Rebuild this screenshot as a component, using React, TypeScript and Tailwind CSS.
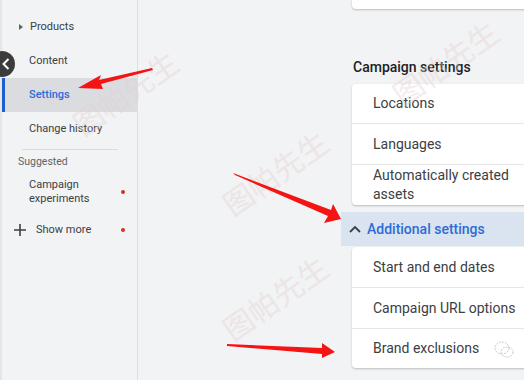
import React from "react";

const wm = "图帕先生";

function Watermark({ x, y }: { x: number; y: number }) {
  return (
    <div
      className="absolute pointer-events-none text-[30px] text-[#e7cfd0] opacity-40 whitespace-nowrap"
      style={{ left: x, top: y, transform: "rotate(-35deg)", fontFamily: '"Noto Sans CJK SC", sans-serif' }}
    >
      {wm}
    </div>
  );
}

export default function App() {
  const side = "font-['Roboto',sans-serif]";
  const card = "font-['Roboto',sans-serif]";
  return (
    <div className="relative w-[524px] h-[380px] overflow-hidden bg-[#f1f3f4] flex">
      {/* sidebar */}
      <div className={`w-[138px] shrink-0 h-full border-l-2 border-l-[#e4e6e8] border-r border-r-[#dcdee0] flex flex-col pt-[10px] text-[11px] text-[#3c4043] ${side}`}>
        <div className="h-[34px] flex items-center pl-[16px]">
          <svg width="6" height="8" viewBox="0 0 6 8" className="mr-[6px]"><path d="M1 1 L5 4 L1 7 Z" fill="#5f6368" /></svg>
          <span>Products</span>
        </div>
        <div className="h-[34px] flex items-center pl-[27px]">Content</div>
        <div className="h-[34px] flex items-center pl-[24px] bg-[#dadce0] border-l-[3px] border-[#1a5fd0] text-[#2f6bd6] font-medium">Settings</div>
        <div className="h-[34px] flex items-center pl-[27px]">Change history</div>
        <div className="mt-[3px] ml-[20px] w-[96px] h-px bg-[#dadce0]" />
        <div className="mt-[5px] pl-[16px] text-[10.5px] leading-[14px] text-[#5f6368]">Suggested</div>
        <div className="mt-[9px] pl-[27px] pr-[12px] flex items-center justify-between leading-[13.5px]">
          <span>Campaign<br />experiments</span>
          <span className="w-[4px] h-[4px] rounded-full bg-[#d93025]" />
        </div>
        <div className="mt-[13px] h-[24px] pl-[11px] pr-[12px] flex items-center">
          <svg width="14" height="14" viewBox="0 0 14 14" className="mr-[9px]"><path d="M7 1 V13 M1 7 H13" stroke="#3c4043" strokeWidth="1.6" /></svg>
          <span className="flex-1">Show more</span>
          <span className="w-[4px] h-[4px] rounded-full bg-[#d93025]" />
        </div>
      </div>

      {/* main */}
      <div className={`flex-1 h-full pl-[203px] ${card}`}>
        <div className="w-[200px] flex flex-col">
          <div className="ml-[11px] h-[9px] bg-white rounded-b-[4px] shadow-[0_1px_2px_rgba(60,64,67,0.3)]" />
          <div className="ml-[12px] mt-[50px] text-[14px] leading-[17px] text-[#202124] font-medium">Campaign settings</div>
          <div className="ml-[11px] mt-[8px] bg-white rounded-l-[4px] shadow-[0_1px_2px_rgba(60,64,67,0.3)] text-[14px] text-[#3c4043]">
            <div className="h-[39px] flex items-center pl-[21px]">Locations</div>
            <div className="h-[41px] flex items-center pl-[21px] border-t border-[#e6e6e6]">Languages</div>
            <div className="h-[41px] flex items-center pl-[21px] border-t border-[#e6e6e6] leading-[19px]">Automatically created<br />assets</div>
          </div>
          <div className="mt-[7px] h-[34px] bg-[#dae3f0] flex items-center pl-[7px] text-[14px] text-[#2f6bd6] font-medium">
            <svg width="14" height="10" viewBox="0 0 14 10" className="mr-[5px]"><path d="M2 8 L7 3 L12 8" stroke="#3c4043" strokeWidth="1.8" fill="none" /></svg>
            Additional settings
          </div>
          <div className="ml-[11px] mt-px bg-white rounded-l-[4px] shadow-[0_1px_2px_rgba(60,64,67,0.3)] text-[14px] text-[#3c4043]">
            <div className="h-[40px] flex items-center pl-[21px]">Start and end dates</div>
            <div className="h-[41px] flex items-center pl-[21px] border-t border-[#e6e6e6]">Campaign URL options</div>
            <div className="h-[40px] flex items-center pl-[21px] border-t border-[#e6e6e6]">Brand exclusions</div>
          </div>
        </div>
      </div>

      {/* collapse button */}
      <div className="absolute left-[-11px] top-[51px] w-[26px] h-[26px] rounded-full bg-[#3c3c3c] flex items-center justify-end pr-[5px]">
        <svg width="8" height="12" viewBox="0 0 8 12"><path d="M6.5 1 L1.5 6 L6.5 11" stroke="white" strokeWidth="2" fill="none" /></svg>
      </div>

      {/* watermarks */}
      <Watermark x={65} y={70} />
      <Watermark x={215} y={150} />
      <Watermark x={215} y={275} />
      <Watermark x={385} y={40} />

      {/* wechat-like mark */}
      <svg className="absolute left-[493px] top-[340px]" width="22" height="20" viewBox="0 0 22 20">
        <ellipse cx="9" cy="8" rx="7" ry="6" fill="none" stroke="#bbb" strokeWidth="0.8" strokeDasharray="2 1" />
        <ellipse cx="14" cy="12" rx="6" ry="5" fill="none" stroke="#bbb" strokeWidth="0.8" strokeDasharray="2 1" />
      </svg>

      {/* annotation arrows */}
      <svg className="absolute left-0 top-0 pointer-events-none" width="524" height="380">
        <polygon points="152,68 99,80 101,75 78,88 103,89 101,84 153,70" fill="#f41414" />
        <polygon points="233,173 331,210 333,204 341,219 324,223 328,216 235,175" fill="#f41414" />
        <polygon points="227,344 322,348 322,343 335,352 322,358 322,354 227,346" fill="#f41414" />
      </svg>
    </div>
  );
}
